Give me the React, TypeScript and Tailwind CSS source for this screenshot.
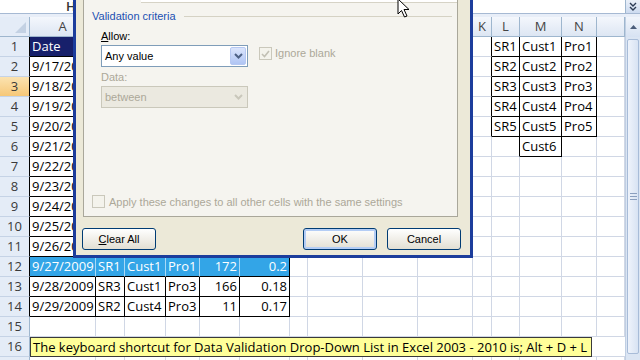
import React from "react";

// B..J sit under the dialog, so their header letters are never seen
const LETTERS = ["", "A", "", "", "", "", "", "", "", "", "", "K", "L", "M", "N", ""];

const data: Record<number, Record<number, string>> = {
  1: { 1: "Date", 12: "SR1", 13: "Cust1", 14: "Pro1" },
  2: { 1: "9/17/2009", 12: "SR2", 13: "Cust2", 14: "Pro2" },
  3: { 1: "9/18/2009", 12: "SR3", 13: "Cust3", 14: "Pro3" },
  4: { 1: "9/19/2009", 12: "SR4", 13: "Cust4", 14: "Pro4" },
  5: { 1: "9/20/2009", 12: "SR5", 13: "Cust5", 14: "Pro5" },
  6: { 1: "9/21/2009", 13: "Cust6" },
  7: { 1: "9/22/2009" },
  8: { 1: "9/23/2009" },
  9: { 1: "9/24/2009" },
  10: { 1: "9/25/2009" },
  11: { 1: "9/26/2009" },
  12: { 1: "9/27/2009", 2: "SR1", 3: "Cust1", 4: "Pro1", 5: "172", 6: "0.2" },
  13: { 1: "9/28/2009", 2: "SR3", 3: "Cust1", 4: "Pro3", 5: "166", 6: "0.18" },
  14: { 1: "9/29/2009", 2: "SR2", 3: "Cust4", 4: "Pro3", 5: "11", 6: "0.17" },
};

function boxed(r: number, c: number) {
  return (
    (r >= 1 && r <= 14 && c >= 1 && c <= 6) ||
    (r >= 1 && r <= 5 && c >= 12 && c <= 14) ||
    (r === 6 && c === 13)
  );
}

function Cell({ r, c }: { r: number; c: number }) {
  const text = data[r]?.[c] ?? "";
  const right = c === 5 || c === 6;
  const sel = r === 12 && c <= 6;
  const date = r === 1 && c === 1;

  let rb = "border-r-[#d0d7e5]";
  if (sel && c < 6) rb = "border-r-[#a9d9f6]";
  else if (boxed(r, c) || boxed(r, c + 1)) rb = "border-r-black";
  const bb = boxed(r, c) || boxed(r + 1, c) ? "border-b-black" : "border-b-[#d0d7e5]";
  const bg = date ? "bg-[#17206b] text-white" : sel ? "bg-[#33a5e7] text-white" : "bg-white text-black";

  return (
    <div
      className={`h-[20px] border-r border-b ${rb} ${bb} ${bg} overflow-hidden whitespace-nowrap px-[2px] leading-[19px] ${
        right ? "text-right" : "text-left"
      }`}
    >
      {text}
    </div>
  );
}

function RowHead({ r, label = true }: { r: number; label?: boolean }) {
  const rb = boxed(r, 1) ? "border-r-black" : "border-r-[#9eb6ce]";
  const bg = r === 3 ? "bg-linear-to-b from-[#fbe3b0] to-[#f6c777]" : "bg-[#e4ecf7]";
  return (
    <div className={`h-[20px] border-r border-b border-b-[#c5d3e6] ${rb} ${bg} text-center leading-[19px] text-[#3a3a3a]`}>
      {label ? r : null}
    </div>
  );
}

function Chevron({ color }: { color: string }) {
  return (
    <svg width="9" height="6" viewBox="0 0 9 6">
      <path d="M1 1 L4.5 4.5 L8 1" stroke={color} strokeWidth="2" fill="none" />
    </svg>
  );
}

function XpButton({ children, primary }: { children: React.ReactNode; primary?: boolean }) {
  return (
    <div
      className={`h-[22px] w-[74px] rounded-[3px] border border-[#003c74] bg-linear-to-b from-white to-[#e2dfd3] flex items-center justify-center text-black ${
        primary ? "shadow-[inset_0_0_0_2px_#b4cdf5]" : ""
      }`}
    >
      {children}
    </div>
  );
}

function Dialog() {
  return (
    <div className="absolute left-[73px] top-0 w-[400px] h-[258px] bg-[#ece9d8] border-x-[3px] border-b-[3px] border-[#1c3d9c] flex flex-col font-['Liberation_Sans',sans-serif] text-[11px]">
      <div className="ml-[7px] w-[375px] h-[217px] bg-[#f5f4ef] border-x border-b border-[#a9a79a] flex flex-col">
        <div className="ml-[57px] h-[3px] bg-white border-b border-[#d6d3c6]" />

        {/* Validation criteria */}
        <div className="mt-[7px] h-[12px] flex items-center pl-[8px]">
          <span className="text-[#2150b2]">Validation criteria</span>
          <div className="flex-1 ml-[8px] mr-[5px] h-px bg-[#d5d2c4]" />
        </div>

        <div className="mt-[8px] pl-[17px] h-[12px] leading-[12px] text-black">
          <span className="underline">A</span>llow:
        </div>

        <div className="mt-[3px] pl-[17px] flex items-start">
          <div className="w-[147px] h-[22px] border border-[#7f9db9] bg-white flex items-center pl-[3px] text-black">
            <span>Any value</span>
            <div className="ml-auto mr-[1px] w-[16px] h-[18px] rounded-[2px] border border-[#b6c8f2] bg-linear-to-b from-[#dbe5fc] to-[#b0c5f4] flex items-center justify-center">
              <Chevron color="#4d6185" />
            </div>
          </div>
          <div className="ml-[11px] mt-[2px] w-[13px] h-[13px] border border-[#cac8bb] bg-[#f4f3ec] flex items-center justify-center">
            <svg width="9" height="8" viewBox="0 0 9 8">
              <path d="M1 4 L3.5 6.5 L8 1" stroke="#c2c0b4" strokeWidth="1.6" fill="none" />
            </svg>
          </div>
          <span className="ml-[3px] mt-[2px] leading-[13px] text-[#aca899]">Ignore blank</span>
        </div>

        <div className="mt-[4px] pl-[17px] h-[12px] leading-[12px] text-[#aca899]">Data:</div>

        <div className="mt-[3px] pl-[17px]">
          <div className="w-[147px] h-[22px] border border-[#cac8bb] bg-[#ebe9e0] flex items-center pl-[3px] text-[#aca899]">
            <span>between</span>
            <div className="ml-auto mr-[1px] w-[16px] h-[18px] flex items-center justify-center">
              <Chevron color="#c9c7bb" />
            </div>
          </div>
        </div>

        <div className="flex-1" />

        <div className="mb-[6px] pl-[8px] flex items-center">
          <div className="w-[13px] h-[13px] border border-[#cac8bb] bg-[#f4f3ec]" />
          <span className="ml-[4px] text-[#aca899]">Apply these changes to all other cells with the same settings</span>
        </div>
      </div>

      <div className="mt-[11px] ml-[6px] mr-[9px] flex items-center gap-[10px]">
        <XpButton>
          <span>
            <span className="underline">C</span>lear All
          </span>
        </XpButton>
        <div className="flex-1" />
        <XpButton primary>OK</XpButton>
        <XpButton>Cancel</XpButton>
      </div>
    </div>
  );
}

function Cursor() {
  return (
    <svg className="absolute left-[397px] top-[-2px]" width="13" height="20" viewBox="0 0 13 20">
      <path d="M1 1 L1 16 L4.5 12.5 L7.5 19 L10 18 L7 11.5 L12 11.5 Z" fill="white" stroke="black" strokeWidth="1" strokeLinejoin="round" />
    </svg>
  );
}

export default function App() {
  const rows = Array.from({ length: 15 }, (_, i) => i + 1);
  const cols = Array.from({ length: 15 }, (_, i) => i + 1);

  return (
    <div className="relative w-[640px] h-[360px] overflow-hidden bg-white flex flex-col font-['Open_Sans',sans-serif] text-[13px]">
      {/* Formula bar */}
      <div className="h-[14px] flex border-b border-[#a6b9d3] bg-white">
        <div className="flex-1 pl-[66px] leading-[13px] font-semibold text-[#333]">H</div>
        <div className="w-[15px] bg-linear-to-b from-[#eaf0f9] to-[#cddbf0] border-l border-[#9eb6ce] flex items-center justify-center">
          <svg width="8" height="10" viewBox="0 0 8 10">
            <path d="M1 1 L4 4 L7 1 M1 5 L4 8 L7 5" stroke="#2b3b55" strokeWidth="1.4" fill="none" />
          </svg>
        </div>
      </div>
      <div className="h-[3px] bg-[#e8eef8]" />

      <div className="flex-1 flex min-h-0">
        {/* Grid */}
        <div className="w-[625px] grid grid-cols-[30px_66px_29px_41px_34px_40px_50px_18px_55px_55px_55px_19px_28px_42px_35px_28px] auto-rows-[20px] overflow-hidden">
          {/* header row */}
          <div className="relative h-[20px] bg-[#e4ecf7] border-r border-b border-[#9eb6ce]">
            <div className="absolute right-[3px] bottom-[3px] w-0 h-0 border-l-[11px] border-l-transparent border-b-[11px] border-b-[#c3d1e3]" />
          </div>
          {cols.map((c) => (
            <div
              key={c}
              className={`h-[20px] border-r border-b border-[#9eb6ce] text-center leading-[19px] text-[#444] ${
                c === 10 ? "bg-linear-to-b from-[#fbe3b0] to-[#f6c777]" : "bg-linear-to-b from-[#f4f7fc] to-[#dde6f3]"
              }`}
            >
              {LETTERS[c]}
            </div>
          ))}

          {rows.map((r) => (
            <React.Fragment key={r}>
              <RowHead r={r} />
              {cols.map((c) => (
                <Cell key={c} r={r} c={c} />
              ))}
            </React.Fragment>
          ))}

          {/* row 16 with note */}
          <RowHead r={16} />
          <div className="col-span-15 h-[20px] border-b border-[#d0d7e5]">
            <div className="w-[562px] h-[20px] bg-[#ffff99] border border-[#3a3a3a] leading-[18px] px-[2px] whitespace-nowrap overflow-hidden text-black">
              The keyboard shortcut for Data Validation Drop-Down List in Excel 2003 - 2010 is; Alt + D + L
            </div>
          </div>

          <RowHead r={17} label={false} />
          {cols.map((c) => (
            <div key={c} className="h-[20px] border-r border-b border-[#d0d7e5]" />
          ))}
        </div>

        {/* Vertical scrollbar */}
        <div className="w-[15px] bg-[#dbe5f3] flex flex-col border-l border-[#c0cfe3]">
          <div className="h-[20px] bg-linear-to-b from-[#f1f5fb] to-[#d7e2f2] flex items-center justify-center">
            <svg width="7" height="4" viewBox="0 0 7 4">
              <path d="M0 4 L3.5 0 L7 4 Z" fill="#4b5d7a" />
            </svg>
          </div>
          <div className="flex-1 mx-[1px] mt-[2px] mb-[6px] rounded-[2px] border border-[#a8bcd8] bg-linear-to-r from-[#eef3fb] to-[#d8e3f3] flex items-center justify-center">
            <div className="flex flex-col gap-[2px]">
              <div className="w-[7px] h-px bg-[#8a9fbf]" />
              <div className="w-[7px] h-px bg-[#8a9fbf]" />
              <div className="w-[7px] h-px bg-[#8a9fbf]" />
            </div>
          </div>
        </div>
      </div>

      <Dialog />
      <Cursor />
    </div>
  );
}
